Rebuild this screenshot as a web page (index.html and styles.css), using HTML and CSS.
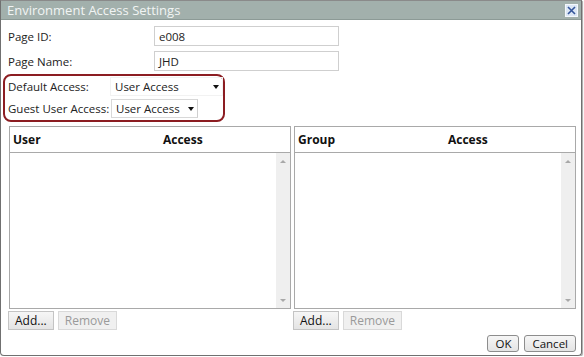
FILE: index.html
```html
<!DOCTYPE html>
<html lang="en">
<head>
  <title>Environment Access Settings</title>
<link rel="stylesheet" href="styles.css">
</head>
<body>

<div class="dialog">
  <div class="titlebar">
    <span class="title">Environment Access Settings</span>
    <span class="close">
      <svg width="9" height="9" viewBox="0 0 9 9"><path d="M1 1 L8 8 M8 1 L1 8" stroke="#34559a" stroke-width="1.6" fill="none"/></svg>
    </span>
  </div>

  <div class="content">
    <div class="field-row">
      <label class="field-label">Page ID:</label>
      <div class="text-input">e008</div>
    </div>
    <div class="field-row">
      <label class="field-label">Page Name:</label>
      <div class="text-input">JHD</div>
    </div>

    <div class="access-box">
      <div class="access-row">
        <label class="access-label">Default Access:</label>
        <div class="select select--wide">User Access<span class="arrow"></span></div>
      </div>
      <div class="access-row">
        <label class="access-label">Guest User Access:</label>
        <div class="select select--narrow">User Access<span class="arrow"></span></div>
      </div>
    </div>

    <div class="lists">
      <div class="list-panel">
        <div class="grid">
          <div class="grid__head">
            <span class="grid__col">User</span>
            <span class="grid__col">Access</span>
          </div>
          <div class="grid__body">
            <div class="grid__rows"></div>
            <div class="scrollbar">
              <span class="scroll-up"></span>
              <span class="scroll-down"></span>
            </div>
          </div>
        </div>
        <div class="list-buttons">
          <button class="btn">Add...</button>
          <button class="btn btn--disabled">Remove</button>
        </div>
      </div>

      <div class="list-panel">
        <div class="grid">
          <div class="grid__head">
            <span class="grid__col">Group</span>
            <span class="grid__col">Access</span>
          </div>
          <div class="grid__body">
            <div class="grid__rows"></div>
            <div class="scrollbar">
              <span class="scroll-up"></span>
              <span class="scroll-down"></span>
            </div>
          </div>
        </div>
        <div class="list-buttons">
          <button class="btn">Add...</button>
          <button class="btn btn--disabled">Remove</button>
        </div>
      </div>
    </div>

    <div class="footer">
      <button class="btn btn--small">OK</button>
      <button class="btn btn--small">Cancel</button>
    </div>
  </div>
</div>

</body>
</html>
```

FILE: styles.css
```css
body {
  margin: 0;
  background-color: white;
  font-family: 'Open Sans', 'Noto Sans', sans-serif;
  font-size: 11.5px;
  color: #222;
}

.dialog {
  width: 582px;
  height: 356px;
  box-sizing: border-box;
  border: 1px solid #707070;
  border-top-color: #8a8a8a;
  border-radius: 0 0 4px 4px;
  box-shadow: 1px 1px 1px #a8a8a8;
  overflow: hidden;
}

.titlebar {
  height: 18px;
  background-color: #a2b0ac;
  border-bottom: 1px solid #8c9a96;
  display: flex;
  align-items: center;
  justify-content: space-between;
  padding: 0 3px 0 6px;
}

.title {
  color: #f1f4f3;
  font-size: 13px;
}

.close {
  width: 11px;
  height: 11px;
  border: 1px solid #f4f8fc;
  background-color: #dce7f5;
  display: flex;
  align-items: center;
  justify-content: center;
}

.content {
  padding: 6px 0 0 7px;
}

.field-row {
  display: flex;
  align-items: center;
  height: 20px;
  margin-bottom: 5px;
}

.field-label {
  width: 146px;
  white-space: nowrap;
}

.text-input {
  width: 185px;
  height: 20px;
  box-sizing: border-box;
  border: 1px solid #cfcfcf;
  padding: 2px 4px;
  line-height: 15px;
}

.access-box {
  width: 222px;
  height: 48px;
  box-sizing: border-box;
  margin: -2px 0 0 -5px;
  border: 2px solid #8c1d22;
  border-radius: 8px;
  padding: 1px 0 0 3px;
}

.access-row {
  display: flex;
  align-items: center;
  height: 19px;
  margin-bottom: 3px;
}

.access-label {
  width: 102px;
  white-space: nowrap;
}

.select {
  height: 19px;
  box-sizing: border-box;
  display: flex;
  align-items: center;
  justify-content: space-between;
  padding: 0 3px 0 4px;
  white-space: nowrap;
}

.select--wide {
  width: 113px;
  border: 1px solid #f2f2f2;
}

.select--narrow {
  width: 87px;
  margin-left: 1px;
  border: 1px solid #d8d8d8;
  border-right-color: #cfcfcf;
}

.arrow {
  width: 0;
  height: 0;
  border-left: 3.5px solid transparent;
  border-right: 3.5px solid transparent;
  border-top: 4px solid #111;
}

.lists {
  display: flex;
  gap: 2px;
  margin-top: 4px;
}

.list-panel {
  width: 283px;
}

.grid {
  width: 282px;
  height: 183px;
  box-sizing: border-box;
  margin-left: 1px;
  border: 1px solid #a9a9a9;
  display: flex;
  flex-direction: column;
}

.grid__head {
  height: 26px;
  flex-shrink: 0;
  box-sizing: border-box;
  border-bottom: 1px solid #a9a9a9;
  display: flex;
  align-items: center;
  font-size: 12px;
  font-weight: bold;
  color: #111;
}

.grid__col {
  padding-left: 3px;
}

.grid__col:first-child {
  width: 147px;
}

.grid__body {
  flex: 1;
  display: flex;
}

.grid__rows {
  flex: 1;
}

.scrollbar {
  width: 14px;
  background-color: #efefef;
  display: flex;
  flex-direction: column;
  justify-content: space-between;
  align-items: center;
  padding: 7px 0 6px;
}

.scroll-up,
.scroll-down {
  width: 0;
  height: 0;
  border-left: 3px solid transparent;
  border-right: 3px solid transparent;
}

.scroll-up {
  border-bottom: 3px solid #a8a8a8;
}

.scroll-down {
  border-top: 3px solid #a8a8a8;
}

.list-buttons {
  display: flex;
  gap: 4px;
  margin-top: 2px;
}

.btn {
  font-family: 'Open Sans', 'Noto Sans', sans-serif;
  font-size: 12px;
  color: #111;
  height: 19px;
  padding: 0 6px;
  border: 1px solid #c4c4c4;
  border-radius: 0;
  background: linear-gradient(#f6f6f6, #e4e4e4);
  line-height: 15px;
}

.btn--disabled {
  color: #9a9a9a;
  border-color: #d9d9d9;
  background: #f0f0f0;
}

.footer {
  display: flex;
  justify-content: flex-end;
  gap: 5px;
  margin-top: 5px;
  padding-right: 5px;
}

.btn--small {
  height: 17px;
  line-height: 13px;
  padding: 0 7px;
  border: 1px solid #8d8d8d;
  border-radius: 3px;
  font-size: 11.5px;
}
```
